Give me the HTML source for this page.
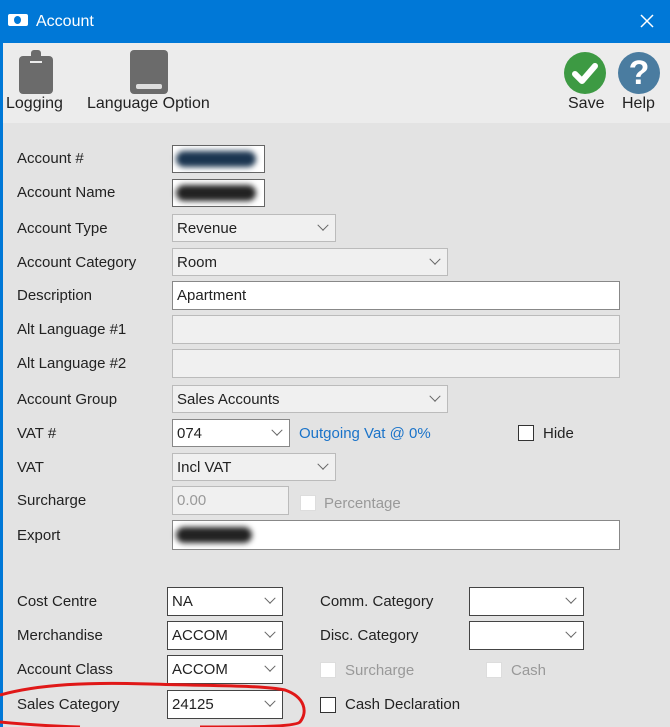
<!DOCTYPE html><html><head><style>
body{margin:0;width:670px;height:727px;overflow:hidden;background:#e3e3e3;font-family:"Liberation Sans",sans-serif;font-size:15px;color:#222;position:relative}
.a{position:absolute}
.lb{position:absolute;left:17px}
.in{position:absolute;background:#fff;border:1px solid #999;box-sizing:border-box;padding-left:4px;padding-top:1px;line-height:26px}
.dis{background:#f0f0f0;border-color:#bbb;color:#999}
.dd{position:absolute;right:8px;top:9px;width:7px;height:7px;border-right:1.2px solid #666;border-bottom:1.2px solid #666;transform:rotate(45deg) translate(-2px,-2px)}
.sel{background:#f0f0f0;border-color:#bbb}
.cb{position:absolute;width:16px;height:16px;background:#fff;border:1px solid #333;box-sizing:border-box}
.blur{position:absolute;background:#222;border-radius:8px;filter:blur(3px)}
</style></head><body>
<div class="a" style="left:0;top:0;width:670px;height:43px;background:#0078d7;color:#fff">
<div class="a" style="left:8px;top:14px;width:20px;height:12px;background:#fff;border-radius:2px"><div class="a" style="left:6px;top:2px;width:7px;height:8px;border-radius:50%;background:#0078d7"></div></div>
<div class="a" style="left:36px;top:13px;font-size:16px">Account</div>
<svg class="a" style="left:640px;top:14px" width="14" height="14"><path d="M1 1L13 13M13 1L1 13" stroke="#fff" stroke-width="1.5"/></svg></div>
<div class="a" style="left:0;top:43px;width:3px;height:684px;background:#0078d7"></div>
<div class="a" style="left:3px;top:43px;width:667px;height:80px;background:#ececec"></div>
<div class="a" style="left:19px;top:56px;width:34px;height:38px;background:#6b6b6b;border-radius:4px"></div>
<div class="a" style="left:31px;top:50px;width:10px;height:8px;background:#6b6b6b;border-radius:3px 3px 0 0"></div>
<div class="a" style="left:30px;top:61px;width:12px;height:2px;background:#ececec"></div>
<div class="a" style="left:130px;top:50px;width:38px;height:44px;background:#6b6b6b;border-radius:4px"></div>
<div class="a" style="left:136px;top:84px;width:26px;height:5px;background:#ddd;border-radius:2px"></div>
<div class="a" style="left:6px;top:95px;font-size:16px">Logging</div>
<div class="a" style="left:87px;top:95px;font-size:16px">Language Option</div>
<div class="a" style="left:564px;top:52px;width:42px;height:42px;border-radius:50%;background:#3d9a43"><svg width="42" height="42"><path d="M11 22 L18 29 L31 14" stroke="#fff" stroke-width="6" fill="none" stroke-linecap="round" stroke-linejoin="round"/></svg></div>
<div class="a" style="left:618px;top:52px;width:42px;height:42px;border-radius:50%;background:#4a7ca0;color:#fff;font-weight:bold;font-size:34px;text-align:center;line-height:42px">?</div>
<div class="a" style="left:568px;top:95px;font-size:16px">Save</div>
<div class="a" style="left:622px;top:95px;font-size:16px">Help</div>

<div class="lb" style="top:150px">Account #</div>
<div class="lb" style="top:184px">Account Name</div>
<div class="lb" style="top:220px">Account Type</div>
<div class="lb" style="top:254px">Account Category</div>
<div class="lb" style="top:287px">Description</div>
<div class="lb" style="top:321px">Alt Language #1</div>
<div class="lb" style="top:355px">Alt Language #2</div>
<div class="lb" style="top:391px">Account Group</div>
<div class="lb" style="top:425px">VAT #</div>
<div class="lb" style="top:459px">VAT</div>
<div class="lb" style="top:492px">Surcharge</div>
<div class="lb" style="top:527px">Export</div>
<div class="lb" style="top:593px">Cost Centre</div>
<div class="lb" style="top:627px">Merchandise</div>
<div class="lb" style="top:661px">Account Class</div>
<div class="lb" style="top:696px">Sales Category</div>

<div class="in" style="left:172px;top:145px;width:93px;height:28px;border-color:#666"></div>
<div class="blur" style="left:176px;top:151px;width:80px;height:16px;background:#1b3550"></div>
<div class="in" style="left:172px;top:179px;width:93px;height:28px;border-color:#666"></div>
<div class="blur" style="left:176px;top:185px;width:80px;height:16px"></div>
<div class="in sel" style="left:172px;top:214px;width:164px;height:28px">Revenue<span class="dd"></span></div>
<div class="in sel" style="left:172px;top:248px;width:276px;height:28px">Room<span class="dd"></span></div>
<div class="in" style="left:172px;top:281px;width:448px;height:29px;border-color:#888">Apartment</div>
<div class="in dis" style="left:172px;top:315px;width:448px;height:29px"></div>
<div class="in dis" style="left:172px;top:349px;width:448px;height:29px"></div>
<div class="in sel" style="left:172px;top:385px;width:276px;height:28px">Sales Accounts<span class="dd"></span></div>
<div class="in" style="left:172px;top:419px;width:118px;height:28px;border-color:#888">074<span class="dd"></span></div>
<div class="a" style="left:299px;top:425px;color:#1a73c9">Outgoing Vat @ 0%</div>
<div class="cb" style="left:518px;top:425px"></div><div class="a" style="left:543px;top:425px">Hide</div>
<div class="in sel" style="left:172px;top:453px;width:164px;height:28px">Incl VAT<span class="dd"></span></div>
<div class="in dis" style="left:172px;top:486px;width:117px;height:29px">0.00</div>
<div class="cb" style="left:300px;top:495px;border-color:#ddd"></div><div class="a" style="left:324px;top:495px;color:#999">Percentage</div>
<div class="in" style="left:172px;top:520px;width:448px;height:30px;border-color:#888"></div>
<div class="blur" style="left:176px;top:527px;width:76px;height:16px"></div>

<div class="in" style="left:167px;top:587px;width:116px;height:29px;border-color:#444">NA<span class="dd"></span></div>
<div class="in" style="left:167px;top:621px;width:116px;height:29px;border-color:#444">ACCOM<span class="dd"></span></div>
<div class="in" style="left:167px;top:655px;width:116px;height:29px;border-color:#444">ACCOM<span class="dd"></span></div>
<div class="in" style="left:167px;top:690px;width:116px;height:29px;border-color:#444">24125<span class="dd"></span></div>
<div class="a" style="left:320px;top:593px">Comm. Category</div>
<div class="a" style="left:320px;top:627px">Disc. Category</div>
<div class="in" style="left:469px;top:587px;width:115px;height:29px;border-color:#444"><span class="dd"></span></div>
<div class="in" style="left:469px;top:621px;width:115px;height:29px;border-color:#444"><span class="dd"></span></div>
<div class="cb" style="left:320px;top:662px;border-color:#ddd"></div><div class="a" style="left:345px;top:662px;color:#999">Surcharge</div>
<div class="cb" style="left:486px;top:662px;border-color:#ddd"></div><div class="a" style="left:511px;top:662px;color:#999">Cash</div>
<div class="cb" style="left:320px;top:697px"></div><div class="a" style="left:345px;top:696px">Cash Declaration</div>
<svg class="a" style="left:0;top:0" width="670" height="727"><path d="M0 695 C40 684 90 682 150 684 C210 686 260 685 285 690 C305 697 308 712 300 722 C295 727 250 727 200 727 M0 722 C20 724 50 726 80 727" stroke="#e01818" stroke-width="3" fill="none"/></svg>
</body></html>
